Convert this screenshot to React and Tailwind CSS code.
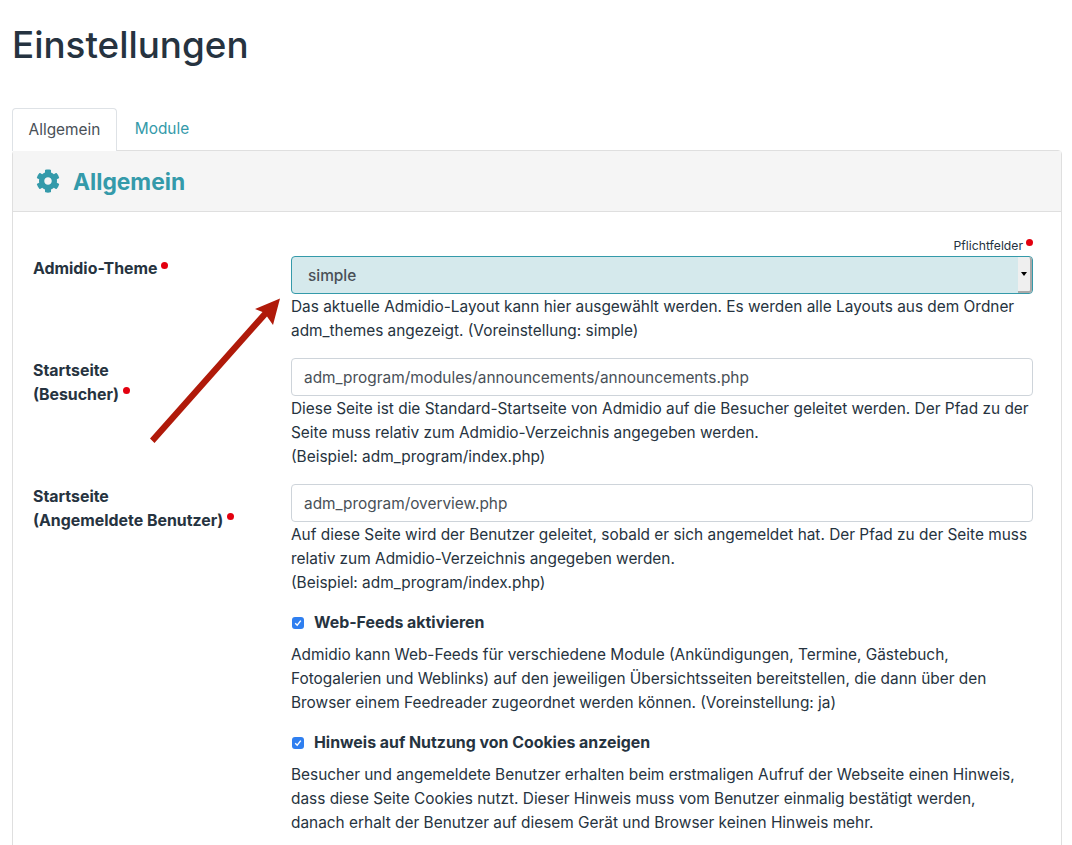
import React from "react";
import { FaCog } from "react-icons/fa";

const Dot = ({ className = "" }) => (
    <span className={"absolute w-[7px] h-[7px] rounded-full bg-[#e3000f] " + className}></span>
);

const Help = ({ children, className = "" }) => (
    <div className={"text-[15.4px] leading-[24px] text-[#263340] whitespace-nowrap " + className}>{children}</div>
);

const Check = ({ label }) => (
    <div className="flex items-center h-[24px]">
        <span className="w-[12px] h-[12px] ml-[1px] rounded-[3px] bg-[#2f7ff0] flex items-center justify-center">
            <svg width="8" height="8" viewBox="0 0 8 8" fill="none">
                <path d="M1.2 4.2 L3.2 6.2 L6.8 1.6" stroke="white" strokeWidth="1.4" />
            </svg>
        </span>
        <span className="ml-[10px] font-bold text-[15.9px] text-[#263340]">{label}</span>
    </div>
);

const Row = ({ label, children, className = "" }) => (
    <div className={"flex " + className}>
        <div className="w-[258px] shrink-0 font-bold text-[15.9px] leading-[24px] text-[#263340]">{label}</div>
        <div className="w-[742px] shrink-0">{children}</div>
    </div>
);

const TextInput = ({ value }) => (
    <div className="h-[38px] border border-[#ced4da] rounded-[4px] px-[12px] pt-[1px] flex items-center text-[15.4px] text-[#495057]">
        {value}
    </div>
);

const App = () => {
    return (
        <div className="relative h-[845px] overflow-hidden bg-white pl-[12px] pr-[10px] font-['Inter',sans-serif]">
            <h1 className="pt-[21px] text-[36.8px] leading-[48px] font-medium text-[#263340]">Einstellungen</h1>

            <div className="flex mt-[39px] h-[42px] text-[15.4px]">
                <div className="w-[105px] h-[43px] relative z-10 bg-white border border-[#dee2e6] border-b-0 rounded-t-[4px] flex items-center justify-center text-[#495057]">
                    Allgemein
                </div>
                <div className="w-[90px] flex items-center justify-center text-[#349aaa]">Module</div>
            </div>

            <div className="border border-[#dfdfdf] rounded-[4px] h-[800px]">
                <div className="h-[61px] bg-[#f5f5f5] border-b border-[#dfdfdf] flex items-center pl-[23px] text-[#349aaa]">
                    <FaCog className="w-[24px] h-[24px]" />
                    <span className="ml-[13px] pt-[2px] text-[22.8px] font-bold">Allgemein</span>
                </div>

                <div className="pl-[20px] pt-[25px]">
                    <div className="w-[1000px] relative h-[19px] text-right text-[12.2px] leading-[17px] text-[#263340] pr-[10px]">
                        Pflichtfelder
                        <Dot className="right-0 top-[2px]" />
                    </div>

                    <Row label={<span className="relative top-[1px]">Admidio-Theme<Dot className="ml-[3px] mt-[5px]" /></span>}>
                        <div className="h-[38px] border border-[#349aaa] rounded-[4px] bg-[#d5e9ec] flex items-stretch">
                            <div className="flex-1 pl-[16px] pt-[1px] flex items-center text-[15.4px] font-medium text-[#495057]">simple</div>
                            <div className="w-[14px] bg-[#efefef] border-r-[2px] border-b-[2px] border-[#a9a9a9] rounded-r-[3px] flex items-center justify-center">
                                <span className="w-0 h-0 border-x-[3px] border-x-transparent border-t-[4px] border-t-black"></span>
                            </div>
                        </div>
                        <Help className="mt-[1px]">
                            Das aktuelle Admidio-Layout kann hier ausgewählt werden. Es werden alle Layouts aus dem Ordner<br />
                            adm_themes angezeigt. (Voreinstellung: simple)
                        </Help>
                    </Row>

                    <Row
                        className="mt-[15px]"
                        label={<div className="pt-[1px]">Startseite<br /><span className="relative">(Besucher)<Dot className="ml-[4px] mt-[4px]" /></span></div>}
                    >
                        <TextInput value="adm_program/modules/announcements/announcements.php" />
                        <Help className="mt-[1px]">
                            Diese Seite ist die Standard-Startseite von Admidio auf die Besucher geleitet werden. Der Pfad zu der<br />
                            Seite muss relativ zum Admidio-Verzeichnis angegeben werden.<br />
                            (Beispiel: adm_program/index.php)
                        </Help>
                    </Row>

                    <Row
                        className="mt-[15px]"
                        label={<div className="pt-[1px]">Startseite<br /><span className="relative">(Angemeldete Benutzer)<Dot className="ml-[4px] mt-[4px]" /></span></div>}
                    >
                        <TextInput value="adm_program/overview.php" />
                        <Help className="mt-[1px]">
                            Auf diese Seite wird der Benutzer geleitet, sobald er sich angemeldet hat. Der Pfad zu der Seite muss<br />
                            relativ zum Admidio-Verzeichnis angegeben werden.<br />
                            (Beispiel: adm_program/index.php)
                        </Help>
                    </Row>

                    <Row className="mt-[16px]" label="">
                        <Check label="Web-Feeds aktivieren" />
                        <Help className="mt-[8px]">
                            Admidio kann Web-Feeds für verschiedene Module (Ankündigungen, Termine, Gästebuch,<br />
                            Fotogalerien und Weblinks) auf den jeweiligen Übersichtsseiten bereitstellen, die dann über den<br />
                            Browser einem Feedreader zugeordnet werden können. (Voreinstellung: ja)
                        </Help>
                    </Row>

                    <Row className="mt-[16px]" label="">
                        <Check label="Hinweis auf Nutzung von Cookies anzeigen" />
                        <Help className="mt-[8px]">
                            Besucher und angemeldete Benutzer erhalten beim erstmaligen Aufruf der Webseite einen Hinweis,<br />
                            dass diese Seite Cookies nutzt. Dieser Hinweis muss vom Benutzer einmalig bestätigt werden,<br />
                            danach erhalt der Benutzer auf diesem Gerät und Browser keinen Hinweis mehr.
                        </Help>
                    </Row>
                </div>
            </div>

            {/* red annotation arrow lies over the form */}
            <svg className="absolute left-0 top-0 pointer-events-none" width="1072" height="845">
                <path d="M150 438.5 L262.5 312 L255 309 L280 298.5 L273 325 L267 316.5 L154.5 443 Z" fill="#b01a0a" />
            </svg>
        </div>
    );
};

export default App;
